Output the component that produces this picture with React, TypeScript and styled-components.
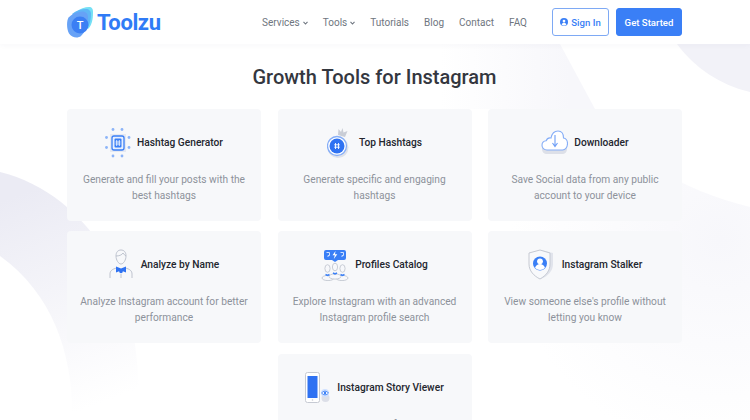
import React from "react";
import styled, { createGlobalStyle } from "styled-components";

const Global = createGlobalStyle`
  html, body { margin: 0; padding: 0; height: 420px; overflow: hidden; background: #fff; }
  * { box-sizing: border-box; }
  body { font-family: Roboto, "Open Sans", "Liberation Sans", sans-serif; }
`;

const Page = styled.div`
  position: relative;
  width: 750px;
  height: 420px;
  overflow: hidden;
  background: #fff;
`;

const Backdrop = styled.svg`
  position: absolute;
  inset: 0;
  width: 750px;
  height: 420px;
`;

const Header = styled.header`
  position: relative;
  height: 44px;
  background: #fff;
  box-shadow: 0 1px 6px rgba(40, 50, 90, 0.04);
  display: flex;
  align-items: center;
  padding: 0 68px 0 67px;
`;

const Brand = styled.div`
  display: flex;
  align-items: center;
  gap: 4px;
  margin-right: auto;
`;

const BrandName = styled.span`
  font-size: 22px;
  font-weight: 700;
  letter-spacing: -0.4px;
  color: #2f7bf6;
`;

const Nav = styled.nav`
  display: flex;
  align-items: center;
  gap: 15px;
  margin-right: 25px;
`;

const NavLink = styled.a`
  display: flex;
  align-items: center;
  gap: 3px;
  font-size: 10px;
  color: #6f7680;
`;

const Caret = styled.svg`
  width: 5px;
  height: 4px;
  margin-top: 2px;
`;

const Buttons = styled.div`
  display: flex;
  gap: 7px;
`;

const Button = styled.a<{ $solid?: boolean }>`
  height: 28px;
  display: flex;
  align-items: center;
  justify-content: center;
  gap: 3px;
  border-radius: 3px;
  font-size: 9.6px;
  font-weight: 500;
  width: ${(p) => (p.$solid ? "66px" : "57px")};
  color: ${(p) => (p.$solid ? "#fff" : "#3a7ff6")};
  background: ${(p) => (p.$solid ? "#3a7ff6" : "#fff")};
  border: 1px solid ${(p) => (p.$solid ? "#3a7ff6" : "#7ea9f4")};
`;

const Main = styled.main`
  position: relative;
  padding: 0 68px 0 67px;
`;

const Title = styled.h1`
  margin: 0;
  padding-top: 21px;
  height: 65px;
  line-height: 24px;
  text-align: center;
  font-size: 20px;
  font-weight: 500;
  color: #34373f;
`;

const Grid = styled.div`
  display: grid;
  grid-template-columns: repeat(3, 194px);
  grid-auto-rows: 112px;
  justify-content: space-between;
  row-gap: 10.4px;
`;

const Card = styled.article<{ $col?: number }>`
  ${(p) => (p.$col ? `grid-column: ${p.$col};` : "")}
  background: #f7f8fa;
  border-radius: 4px;
  padding: 15.6px 10px 0;
  text-align: center;
`;

const CardHead = styled.div<{ $gap: number }>`
  height: 36px;
  display: flex;
  align-items: center;
  justify-content: center;
  gap: ${(p) => p.$gap}px;
  margin-bottom: 11.4px;
`;

const CardTitle = styled.h2`
  margin: 0;
  font-size: 10.2px;
  font-weight: 500;
  color: #23262e;
  white-space: nowrap;
`;

const CardText = styled.p`
  margin: 0;
  font-size: 10.2px;
  line-height: 15.6px;
  color: #8d929b;
`;

const LogoLetter = styled.text`
  font-size: 11px;
  font-weight: 500;
  fill: #fff;
  text-anchor: middle;
`;

const Logo = () => (
  <svg width="26" height="31" viewBox="0 0 26 31">
    <path d="M9 5C13 1.500 18 0 22 0c3 0 4 2 4 5 0 7-1 13-5 17z" fill="#74e0f5" />
    <path d="M5 7c4-3.500 9-5 14-5 3 0 5 2 5 5 0 7-2 13-6 17z" fill="#5fb6f6" />
    <path d="M1.500 10.500C5 7 9 5 15 4.500c3.500-.3 6 2 6 5.500 0 8-2.500 15-7 19-3 2.500-9 2-12-2.500C-.5 22 -.5 14 1.500 10.500z" fill="#67a2f6" />
    <circle cx="13" cy="18" r="8.500" fill="#3b7ff4" />
    <LogoLetter x="13" y="22">T</LogoLetter>
  </svg>
);

const UserDot = () => (
  <svg width="8" height="8" viewBox="0 0 10 10">
    <circle cx="5" cy="5" r="5" fill="#3a7ff6" />
    <circle cx="5" cy="3.900" r="1.700" fill="#fff" />
    <path d="M2 8c.6-1.600 1.700-2.200 3-2.200S7.400 6.400 8 8a4.200 4.200 0 0 1-6 0z" fill="#fff" />
  </svg>
);

const ChipIcon = () => (
  <svg width="26" height="30" viewBox="0 0 26 30">
    <g fill="#8db4f8">
      <circle cx="8" cy="1.500" r="1.400" /><circle cx="17" cy="1.500" r="1.400" />
      <circle cx="8" cy="28" r="1.400" /><circle cx="17" cy="28" r="1.400" />
      <circle cx="1.500" cy="9.500" r="1.400" /><circle cx="1.500" cy="19.500" r="1.400" />
      <circle cx="24" cy="9.500" r="1.400" /><circle cx="24" cy="19.500" r="1.400" />
    </g>
    <rect x="5" y="6" width="16" height="18" fill="#e6e9f1" />
    <rect x="7" y="8" width="12" height="14" rx="2" fill="#e6efff" stroke="#3a7ff6" strokeWidth="1.300" />
    <rect x="9.500" y="10.500" width="7" height="9" rx="1" fill="#3a7ff6" />
    <path d="M11.700 12v6M14.300 12v6M10.500 14h5M10.500 16h5" stroke="#fff" strokeWidth=".8" />
  </svg>
);

const MedalIcon = () => (
  <svg width="22" height="30" viewBox="0 0 22 30">
    <path d="M11 7l.5-6 2.500 3 1.500-4 1 4.500 4-1.500-2.500 6z" fill="#c9cdd6" />
    <circle cx="11" cy="19.500" r="10.500" fill="#dfe2ea" />
    <circle cx="10" cy="18" r="9.500" fill="#fff" stroke="#86aef7" strokeWidth="1.300" />
    <circle cx="10" cy="18" r="7.500" fill="#2f72f2" />
    <path d="M8.500 15v6M11.500 15v6M7.200 16.800h5.600M7.200 19.200h5.600" stroke="#fff" strokeWidth=".9" />
  </svg>
);

const CloudIcon = () => (
  <svg width="27" height="25" viewBox="0 0 27 25">
    <path d="M1 17h25v2c0 3-2 5-5 5H6c-3 0-5-2-5-5z" fill="#dde0e8" />
    <path d="M6 20c-3 0-5-2-5-4.700 0-2.500 1.800-4.300 4.200-4.500C6 8.500 8 7.600 10 8c.8-4 3.400-7 7-7 3.500 0 5.500 3 5.500 7 2.500.5 4 2.800 4 5.600 0 3.300-2 6.400-5 6.400z" fill="#fff" stroke="#86aef7" strokeWidth="1.100" />
    <path d="M14 5v11M11.500 13l2.500 3.500 2.500-3.500" fill="none" stroke="#6e9ef6" strokeWidth="1.100" />
  </svg>
);

const PersonIcon = () => (
  <svg width="24" height="31" viewBox="0 0 24 31">
    <g fill="none" stroke="#b8bdc9" strokeWidth=".9">
      <path d="M7 7c0-4 2-6 5-6s5 2 5 6c0 4-2.500 8-5 8s-5-4-5-8z" />
      <path d="M7 7c3 0 6-1 7-3 .8 1.400 2 2.400 3 3" />
      <path d="M1 29v-4c0-3 2-5 7-6M23 29v-4c0-3-2-5-7-6M12 25v4" />
    </g>
    <path d="M7 17.500l5 2 5-2v6l-5-2-5 2z" fill="#2f72f2" />
    <circle cx="12" cy="22.500" r="1.800" fill="#2f72f2" />
  </svg>
);

const CatalogIcon = () => (
  <svg width="28" height="32" viewBox="0 0 28 32">
    <path d="M5 1h18a2 2 0 0 1 2 2v6a2 2 0 0 1-2 2h-6l-3 2-3-2H5a2 2 0 0 1-2-2V3a2 2 0 0 1 2-2z" fill="#3a7ff6" />
    <path d="M14.500 2l-3 4.200h2.300l-1 3.800 3.500-4.800h-2.300z" fill="#fff" />
    <path d="M5.500 3.500h3v3H7V8M19.500 3.500h3v3H21V8" fill="none" stroke="#cfe0ff" strokeWidth="1" />
    <g fill="#f7f8fb" stroke="#bcc1cc" strokeWidth=".8">
      <ellipse cx="7" cy="29" rx="6" ry="2.600" />
      <ellipse cx="21" cy="29" rx="6" ry="2.600" />
      <ellipse cx="14" cy="27.500" rx="6" ry="2.600" />
      <ellipse cx="6.500" cy="19.500" rx="2.600" ry="3.800" />
      <ellipse cx="21.500" cy="19.500" rx="2.600" ry="3.800" />
      <ellipse cx="14" cy="18" rx="2.600" ry="3.800" />
    </g>
    <path d="M4.500 25.500l2 1 2-1M19.500 25.500l2 1 2-1M12 24l2 1 2-1" fill="none" stroke="#3a7ff6" strokeWidth="1.400" />
  </svg>
);

const ShieldIcon = () => (
  <svg width="26" height="31" viewBox="0 0 26 31">
    <path d="M13 1l12 3v11c0 7-5 12-12 15C6 27 1 22 1 15V4z" fill="#e1e4ec" />
    <path d="M12 1l10 3v11c0 7-4 11.500-10 15C6 27 1 22 1 15V4z" fill="#f8f9fb" stroke="#c6cad3" strokeWidth="1" />
    <circle cx="12" cy="14.500" r="7" fill="#3a7ff6" />
    <circle cx="12" cy="12.300" r="2.900" fill="#fff" />
    <path d="M7 19c1-3 2.800-4 5-4s4 1 5 4a7 7 0 0 1-10 0z" fill="#fff" />
  </svg>
);

const PhoneIcon = () => (
  <svg width="25" height="31" viewBox="0 0 25 31">
    <rect x=".5" y=".5" width="14" height="30" rx="2" fill="#fff" stroke="#c6cad3" />
    <rect x="2.500" y="4" width="10" height="22" fill="#2f72f2" />
    <circle cx="7.500" cy="28" r=".8" fill="#c6cad3" />
    <circle cx="20.500" cy="26" r="4" fill="#dcdfe8" />
    <circle cx="20" cy="21" r="4" fill="#cfe0ff" />
    <path d="M16.500 21c2-2.400 5-2.400 7 0-2 2.400-5 2.400-7 0z" fill="#fff" stroke="#3a7ff6" strokeWidth=".9" />
    <circle cx="20" cy="21" r="1.200" fill="#3a7ff6" />
  </svg>
);

const tools = [
  { icon: <ChipIcon />, gap: 6, name: "Hashtag Generator", text: "Generate and fill your posts with the best hashtags" },
  { icon: <MedalIcon />, gap: 10, name: "Top Hashtags", text: "Generate specific and engaging hashtags" },
  { icon: <CloudIcon />, gap: 6, name: "Downloader", text: "Save Social data from any public account to your device" },
  { icon: <PersonIcon />, gap: 8, name: "Analyze by Name", text: "Analyze Instagram account for better performance" },
  { icon: <CatalogIcon />, gap: 6, name: "Profiles Catalog", text: "Explore Instagram with an advanced Instagram profile search" },
  { icon: <ShieldIcon />, gap: 8, name: "Instagram Stalker", text: "View someone else's profile without letting you know" },
  { icon: <PhoneIcon />, gap: 7, name: "Instagram Story Viewer", text: "Watch the stories of the public Instagram accounts", col: 2 },
];

const links = [
  { label: "Services", caret: true },
  { label: "Tools", caret: true },
  { label: "Tutorials" },
  { label: "Blog" },
  { label: "Contact" },
  { label: "FAQ" },
];

export default function App() {
  return (
    <Page>
      <Global />
      <Backdrop viewBox="0 0 750 420" aria-hidden="true">
        <defs>
          <linearGradient id="ring" gradientUnits="userSpaceOnUse" x1="30" y1="190" x2="110" y2="400">
            <stop offset="0" stopColor="#ebebf4" />
            <stop offset="0.55" stopColor="#f6f6fa" />
            <stop offset="1" stopColor="#ffffff" />
          </linearGradient>
          <radialGradient id="pale" gradientUnits="userSpaceOnUse" cx="720" cy="240" r="210">
            <stop offset="0" stopColor="#f7f7fb" />
            <stop offset="1" stopColor="#ffffff" />
          </radialGradient>
          <linearGradient id="paleLeft" gradientUnits="userSpaceOnUse" x1="570" y1="60" x2="440" y2="60">
            <stop offset="0" stopColor="#f7f7fb" />
            <stop offset="1" stopColor="#ffffff" />
          </linearGradient>
        </defs>
        <path d="M0 172C50 184 92 222 115 270 130 305 139 345 140 420H72C74 360 55 295 0 256z" fill="url(#ring)" />
        <path d="M440 44H560L595 109H440z" fill="url(#paleLeft)" />
        <path d="M595 109C625 155 680 190 750 207V420H500V109z" fill="url(#pale)" />
        <path d="M677 44H750V92C720 85 695 68 677 44z" fill="#f2f2f8" />
      </Backdrop>
      <Header>
        <Brand>
          <Logo />
          <BrandName>Toolzu</BrandName>
        </Brand>
        <Nav>
          {links.map((l) => (
            <NavLink key={l.label}>
              {l.label}
              {l.caret && (
                <Caret viewBox="0 0 5 4">
                  <path d="M.5.800L2.500 3 4.500.800" fill="none" stroke="#6f7680" strokeWidth="1.100" />
                </Caret>
              )}
            </NavLink>
          ))}
        </Nav>
        <Buttons>
          <Button><UserDot />Sign In</Button>
          <Button $solid>Get Started</Button>
        </Buttons>
      </Header>
      <Main>
        <Title>Growth Tools for Instagram</Title>
        <Grid>
          {tools.map((t) => (
            <Card key={t.name} $col={t.col}>
              <CardHead $gap={t.gap}>
                {t.icon}
                <CardTitle>{t.name}</CardTitle>
              </CardHead>
              <CardText>{t.text}</CardText>
            </Card>
          ))}
        </Grid>
      </Main>
    </Page>
  );
}
